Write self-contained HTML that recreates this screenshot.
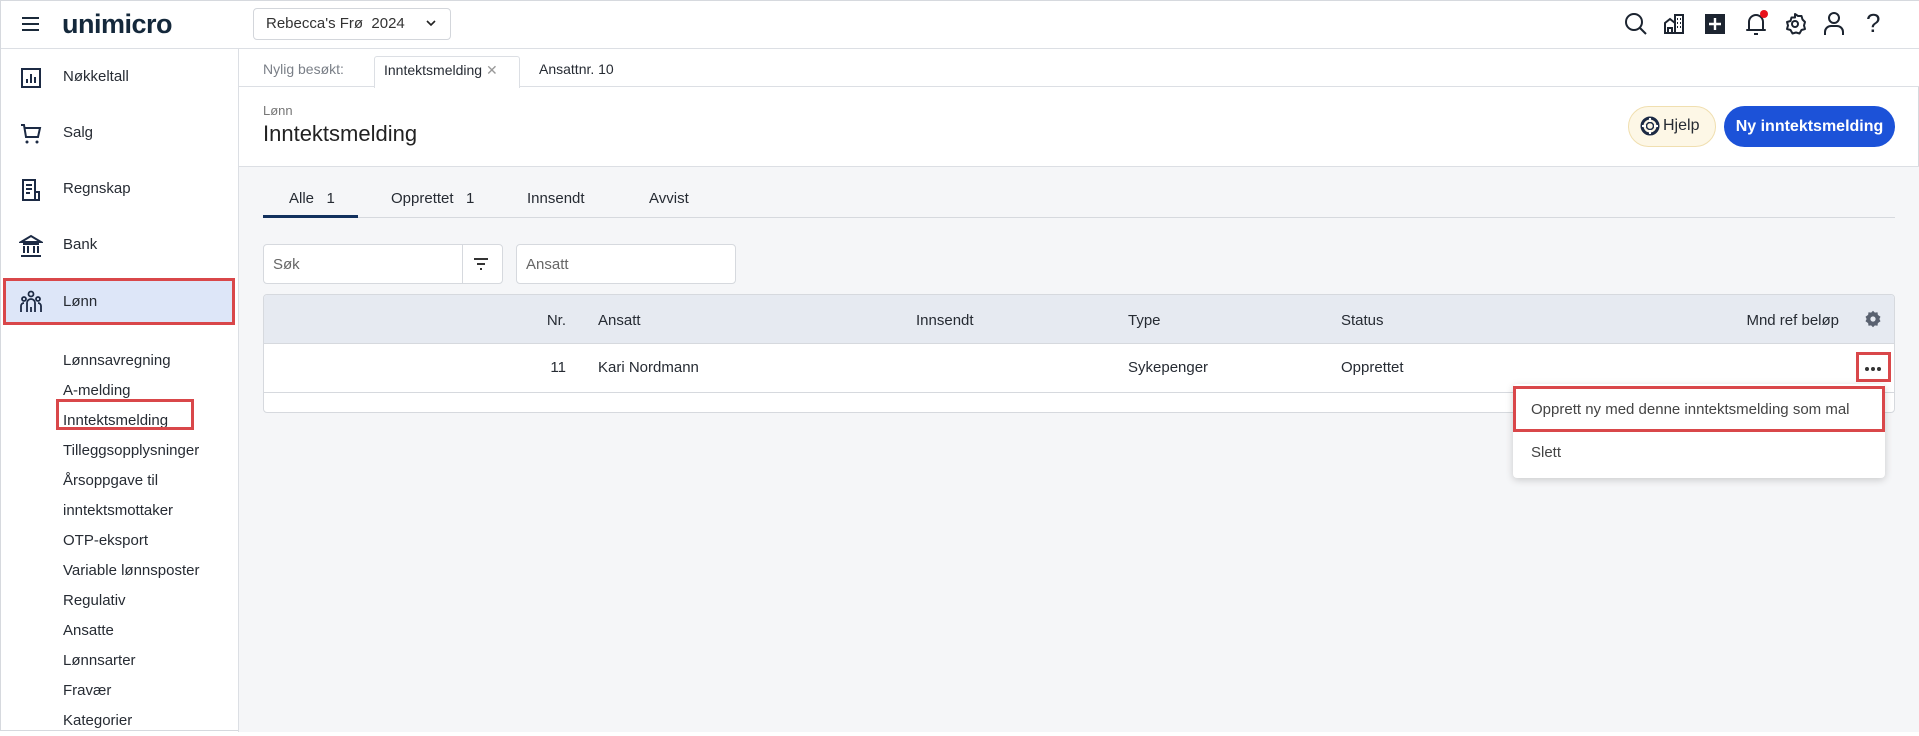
<!DOCTYPE html>
<html><head><meta charset="utf-8"><style>
*{box-sizing:border-box;margin:0;padding:0}
body{width:1919px;height:731px;overflow:hidden;background:#fff;font-family:"Liberation Sans",sans-serif;color:#262b33;position:relative;border:1px solid #d6d9de}
.a{position:absolute;white-space:nowrap}
.t15{font-size:15px}
svg{position:absolute}
</style></head><body>
<!-- top bar -->
<div class="a" style="left:0;top:0;width:1919px;height:48px;border-bottom:1px solid #dcdfe4;background:#fff"></div>
<div class="a" style="left:21px;top:16px;width:17px;height:2px;background:#1b2a3a;box-shadow:0 6px 0 #1b2a3a,0 12px 0 #1b2a3a"></div>
<div class="a" style="left:61px;top:8px;font-size:27px;font-weight:bold;color:#14283b;letter-spacing:-0.5px">unimicro</div>
<div class="a" style="left:252px;top:7px;width:198px;height:32px;border:1px solid #d3d6db;border-radius:4px"></div>
<div class="a" style="left:265px;top:14px;font-size:15px;color:#333">Rebecca's Frø&nbsp;&nbsp;2024</div>
<svg style="left:424px;top:17px" width="12" height="10" viewBox="0 0 12 10"><path d="M2 3l4 4 4-4" fill="none" stroke="#222" stroke-width="1.6"/></svg>
<!-- right icons -->
<svg style="left:1622px;top:10px" width="26" height="26" viewBox="0 0 26 26"><circle cx="11" cy="11" r="8" fill="none" stroke="#1c2430" stroke-width="2"/><path d="M17 17l6 6" stroke="#1c2430" stroke-width="2"/></svg>
<svg style="left:1661px;top:11px" width="24" height="24" viewBox="0 0 24 24"><path d="M3 21V11l5-4 5 4v10M13 21V3h8v18M2 21h20M6 21v-5h4v5M15 7h1M18 7h1M15 11h1M18 11h1M15 15h1M18 15h1" fill="none" stroke="#1c2430" stroke-width="2"/></svg>
<svg style="left:1703px;top:12px" width="22" height="22" viewBox="0 0 22 22"><rect x="1" y="1" width="20" height="20" fill="#1c2430"/><path d="M11 5v12M5 11h12" stroke="#fff" stroke-width="2.4"/></svg>
<svg style="left:1742px;top:8px" width="26" height="28" viewBox="0 0 26 28"><path d="M6 21V13a7 7 0 0 1 14 0v8h2H4z" fill="none" stroke="#1c2430" stroke-width="2" stroke-linejoin="round"/><path d="M11 25h4" stroke="#1c2430" stroke-width="2"/><circle cx="21" cy="5" r="4" fill="#e8121c"/></svg>
<svg style="left:1782px;top:11px" width="24" height="24" viewBox="0 0 24 24"><path d="M12 2l3 2 3.5 0 1 3.5 2.5 2.5-1 3.5 1 3.5-3.5 1-2 3.5-3.5-1-3.5 1-2-3.5-3.5-1 1-3.5-1-3.5 3.5-1 1-3.5 3.5 0z" fill="none" stroke="#1c2430" stroke-width="2" stroke-linejoin="round"/><circle cx="12" cy="12" r="3" fill="none" stroke="#1c2430" stroke-width="2"/></svg>
<svg style="left:1821px;top:10px" width="24" height="26" viewBox="0 0 24 26"><circle cx="12" cy="7" r="5" fill="none" stroke="#1c2430" stroke-width="2"/><path d="M3 24v-3a6 6 0 0 1 6-6h6a6 6 0 0 1 6 6v3" fill="none" stroke="#1c2430" stroke-width="2"/></svg>
<div class="a" style="left:1865px;top:7px;font-size:26px;color:#1c2430">?</div>
<!-- sidebar -->
<div class="a" style="left:237px;top:48px;width:1px;height:683px;background:#dcdfe4"></div>
<svg style="left:19px;top:66px" width="22" height="22" viewBox="0 0 22 22"><rect x="2" y="2" width="18" height="18" fill="none" stroke="#1c2a44" stroke-width="2"/><path d="M7 16v-4M11 16V7M15 16v-6" stroke="#1c2a44" stroke-width="2"/></svg>
<div class="a t15" style="left:62px;top:67px">Nøkkeltall</div>
<svg style="left:18px;top:121px" width="24" height="24" viewBox="0 0 24 24"><path d="M2 3h3l2 12h12l2-9H6" fill="none" stroke="#1c2a44" stroke-width="2"/><circle cx="8" cy="20" r="1.5" fill="#1c2a44"/><circle cx="18" cy="20" r="1.5" fill="#1c2a44"/></svg>
<div class="a t15" style="left:62px;top:123px">Salg</div>
<svg style="left:19px;top:177px" width="22" height="24" viewBox="0 0 22 24"><path d="M3 2h12v20H3zM15 14h4v8h-4M6 7h6M6 11h6M6 15h4" fill="none" stroke="#1c2a44" stroke-width="2"/></svg>
<div class="a t15" style="left:62px;top:179px">Regnskap</div>
<svg style="left:18px;top:233px" width="24" height="24" viewBox="0 0 24 24"><path d="M2 8l10-6 10 6zM4 10h16M5 12v7M9 12v7M15 12v7M19 12v7M2 22h20" fill="none" stroke="#1c2a44" stroke-width="2"/></svg>
<div class="a t15" style="left:62px;top:235px">Bank</div>
<div class="a" style="left:2px;top:277px;width:232px;height:47px;background:#dde6f8;border:3px solid #d9474a"></div>
<svg style="left:18px;top:289px" width="24" height="24" viewBox="0 0 24 24"><circle cx="12" cy="4" r="2.5" fill="none" stroke="#1c2a44" stroke-width="1.8"/><circle cx="5" cy="9" r="2" fill="none" stroke="#1c2a44" stroke-width="1.8"/><circle cx="19" cy="9" r="2" fill="none" stroke="#1c2a44" stroke-width="1.8"/><path d="M8 22v-9a4 4 0 0 1 8 0v9M2 22v-6a3 3 0 0 1 3-3M22 22v-6a3 3 0 0 0-3-3M12 17v5" fill="none" stroke="#1c2a44" stroke-width="1.8"/></svg>
<div class="a t15" style="left:62px;top:292px">Lønn</div>
<div class="a t15" style="left:62px;top:345px;line-height:30px">Lønnsavregning<br>A-melding<br>Inntektsmelding<br>Tilleggsopplysninger<br><span style="line-height:22px">Årsoppgave til</span><br><span>inntektsmottaker</span><br>OTP-eksport<br>Variable lønnsposter<br>Regulativ<br>Ansatte<br>Lønnsarter<br>Fravær<br>Kategorier</div>
<div class="a" style="left:55px;top:398px;width:138px;height:31px;border:3px solid #d9474a"></div>
<!-- recent tabs -->
<div class="a" style="left:238px;top:48px;width:1681px;height:38px;background:#fff;border-bottom:1px solid #dcdfe4"></div>
<div class="a" style="left:262px;top:60px;font-size:14px;color:#7a7f87">Nylig besøkt:</div>
<div class="a" style="left:373px;top:55px;width:146px;height:32px;background:#fff;border:1px solid #dcdfe4;border-bottom:none;border-radius:3px 3px 0 0"></div>
<div class="a" style="left:383px;top:61px;font-size:14px">Inntektsmelding <span style="color:#999">✕</span></div>
<div class="a" style="left:538px;top:60px;font-size:14px">Ansattnr. 10</div>
<!-- header -->
<div class="a" style="left:262px;top:102px;font-size:13px;color:#777">Lønn</div>
<div class="a" style="left:262px;top:120px;font-size:22px;color:#222">Inntektsmelding</div>
<div class="a" style="left:1627px;top:105px;width:88px;height:41px;background:#fdf7e6;border:1px solid #f0dfb0;border-radius:21px"></div>
<svg style="left:1639px;top:115px" width="20" height="20" viewBox="0 0 20 20"><circle cx="10" cy="10" r="8" fill="none" stroke="#1c2a44" stroke-width="3"/><circle cx="10" cy="10" r="3.5" fill="none" stroke="#1c2a44" stroke-width="1.5"/><path d="M10 2v4M10 14v4M2 10h4M14 10h4" stroke="#fff" stroke-width="2"/></svg>
<div class="a" style="left:1662px;top:116px;font-size:16px">Hjelp</div>
<div class="a" style="left:1723px;top:105px;width:171px;height:41px;background:#1c52d8;border-radius:21px;color:#fff;font-size:16px;font-weight:bold;text-align:center;line-height:41px">Ny inntektsmelding</div>
<!-- content -->
<div class="a" style="left:238px;top:165px;width:1681px;height:566px;background:#f5f6f8;border-top:1px solid #dcdfe4"></div>
<div class="a" style="left:262px;top:216px;width:1632px;height:1px;background:#d6d9de"></div>
<div class="a" style="left:262px;top:214px;width:95px;height:3px;background:#12315e"></div>
<div class="a t15" style="left:288px;top:189px">Alle&nbsp;&nbsp; 1</div>
<div class="a t15" style="left:390px;top:189px">Opprettet&nbsp;&nbsp; 1</div>
<div class="a t15" style="left:526px;top:189px">Innsendt</div>
<div class="a t15" style="left:648px;top:189px">Avvist</div>
<div class="a" style="left:262px;top:243px;width:240px;height:40px;background:#fff;border:1px solid #d6d9de;border-radius:4px"></div>
<div class="a" style="left:461px;top:243px;width:1px;height:40px;background:#d6d9de"></div>
<div class="a t15" style="left:272px;top:255px;color:#666">Søk</div>
<svg style="left:472px;top:256px" width="16" height="14" viewBox="0 0 16 14"><path d="M1 2h14M4 7h8M7 12h2" stroke="#333" stroke-width="2"/></svg>
<div class="a" style="left:515px;top:243px;width:220px;height:40px;background:#fff;border:1px solid #d6d9de;border-radius:4px"></div>
<div class="a t15" style="left:525px;top:255px;color:#666">Ansatt</div>
<!-- table -->
<div class="a" style="left:262px;top:293px;width:1632px;height:119px;background:#fff;border:1px solid #d6d9de;border-radius:4px;overflow:hidden"><div style="height:49px;background:#e6eaf1;border-bottom:1px solid #d6d9de"></div><div style="height:49px;border-bottom:1px solid #d6d9de"></div></div>
<div class="a t15" style="left:535px;top:311px;width:30px;text-align:right">Nr.</div>
<div class="a t15" style="left:597px;top:311px">Ansatt</div>
<div class="a t15" style="left:915px;top:311px">Innsendt</div>
<div class="a t15" style="left:1127px;top:311px">Type</div>
<div class="a t15" style="left:1340px;top:311px">Status</div>
<div class="a t15" style="left:1700px;top:311px;width:138px;text-align:right">Mnd ref beløp</div>
<svg style="left:1863px;top:309px" width="18" height="18" viewBox="0 0 24 24"><path d="M12 1l2.5 2.5 3.5-.5.5 3.5L22 9l-1.5 3L22 15l-3.5 2.5-.5 3.5-3.5-.5L12 23l-2.5-2.5-3.5.5-.5-3.5L2 15l1.5-3L2 9l3.5-2.5L6 3l3.5.5z" fill="#5a6270"/><circle cx="12" cy="12" r="3.5" fill="#e6eaf1"/></svg>
<div class="a t15" style="left:535px;top:358px;width:30px;text-align:right">11</div>
<div class="a t15" style="left:597px;top:358px">Kari Nordmann</div>
<div class="a t15" style="left:1127px;top:358px">Sykepenger</div>
<div class="a t15" style="left:1340px;top:358px">Opprettet</div>
<div class="a" style="left:1855px;top:351px;width:35px;height:30px;border:3px solid #d9474a"></div>
<div class="a" style="left:1864px;top:366px;width:4px;height:4px;border-radius:2px;background:#333;box-shadow:6px 0 0 #333,12px 0 0 #333"></div>
<!-- dropdown -->
<div class="a" style="left:1512px;top:383px;width:372px;height:94px;background:#fff;border-radius:4px;box-shadow:0 2px 8px rgba(0,0,0,0.18)"></div>
<div class="a" style="left:1512px;top:385px;width:372px;height:46px;border:3px solid #d9474a"></div>
<div class="a t15" style="left:1530px;top:400px;color:#444">Opprett ny med denne inntektsmelding som mal</div>
<div class="a t15" style="left:1530px;top:443px;color:#444">Slett</div>
</body></html>
